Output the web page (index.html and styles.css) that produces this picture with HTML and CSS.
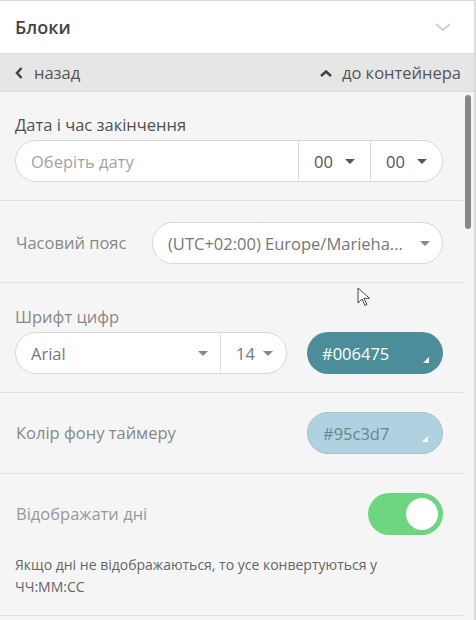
FILE: index.html
```html
<!DOCTYPE html>
<html>
<head>
  <title>Блоки</title>
  <link rel="stylesheet" href="styles.css">
</head>
<body>
  <div class="panel">
    <div class="panelHeader">
      <span class="panelTitle">Блоки</span>
      <svg class="collapseIcon" width="18" height="12" viewBox="0 0 18 12"><path d="M2 3l7 6 7-6" fill="none" stroke="#cfcfcf" stroke-width="2"/></svg>
    </div>
    <div class="navBar">
      <a class="navLink back">
        <svg width="10" height="14" viewBox="0 0 10 14"><path d="M7.5 2L3 7l4.5 5" fill="none" stroke="#444" stroke-width="2.6"/></svg>
        назад
      </a>
      <a class="navLink">
        <svg width="14" height="10" viewBox="0 0 14 10"><path d="M2 8l5-4.5 5 4.5" fill="none" stroke="#444" stroke-width="2.6"/></svg>
        до контейнера
      </a>
    </div>
    <div class="content">
      <div class="sections">
        <div class="section endDate">
          <div class="fieldLabel dark">Дата і час закінчення</div>
          <div class="pill">
            <div class="pillPart grow placeholder">Оберіть дату</div>
            <div class="pillPart small">00 <span class="caret"></span></div>
            <div class="pillPart small">00 <span class="caret"></span></div>
          </div>
        </div>

        <div class="section row timeZone">
          <div class="fieldLabel inline">Часовий пояс</div>
          <div class="pill zone">
            <div class="pillPart grow muted">(UTC+02:00) Europe/Marieha... <span class="caret light"></span></div>
          </div>
        </div>

        <div class="section digitFont">
          <div class="fieldLabel">Шрифт цифр</div>
          <div class="row">
            <div class="pill fontPick">
              <div class="pillPart grow muted">Arial <span class="caret light"></span></div>
              <div class="pillPart size muted">14 <span class="caret light"></span></div>
            </div>
            <div class="colorBox dark">#006475<span class="corner"></span></div>
          </div>
        </div>

        <div class="section row timerBg">
          <div class="fieldLabel inline">Колір фону таймеру</div>
          <div class="colorBox light">#95c3d7<span class="corner"></span></div>
        </div>

        <div class="section showDays">
          <div class="row">
            <div class="fieldLabel inline pale">Відображати дні</div>
            <div class="toggle on"><span class="knob"></span></div>
          </div>
          <p class="hint">Якщо дні не відображаються, то усе конвертуються у ЧЧ:ММ:СС</p>
        </div>
      </div>
      <div class="track"><div class="thumb"></div></div>
    </div>
    <svg class="pointer" width="14" height="20" viewBox="0 0 14 20"><path d="M1 1v15l4-4 3 6.5 2-1-3-6.2h5.5z" fill="#fff" stroke="#444" stroke-width="1"/></svg>
  </div>
</body>
</html>
```

FILE: styles.css
```css
body {
  margin: 0;
  background-color: #dcdcdc;
  font-family: "Open Sans", "Noto Sans", sans-serif;
}
.panel {
  position: relative;
  width: 474px;
  height: 619px;
  border-top: 1px solid #dcdcdc;
  background-color: #f5f5f5;
  overflow: hidden;
}
.panelHeader {
  display: flex;
  align-items: center;
  justify-content: space-between;
  height: 52px;
  padding: 0 22px 0 15px;
  background-color: #fff;
  border-bottom: 1px solid #dcdcdc;
}
.panelTitle {
  font-size: 18px;
  font-weight: 600;
  color: #444;
}
.navBar {
  display: flex;
  align-items: center;
  justify-content: space-between;
  height: 37px;
  padding: 0 13px 0 14px;
  background-color: #e6e6e6;
  border-bottom: 1px solid #dcdcdc;
  font-size: 16.5px;
  color: #555;
}
.navLink {
  display: flex;
  align-items: center;
  gap: 9px;
}
.navLink.back {
  gap: 10px;
}
.content {
  display: flex;
}
.sections {
  flex: 1;
}
.track {
  width: 11px;
  padding-top: 3px;
}
.thumb {
  width: 6px;
  height: 134px;
  margin-left: 2px;
  border-radius: 3px;
  background-color: #888;
}
.section {
  padding: 19px 20px 19px 15px;
  border-bottom: 1px solid #e0e0e0;
}
.section.endDate {
  padding-top: 23px;
  padding-bottom: 18px;
}
.section.timeZone {
  padding-top: 21px;
  padding-bottom: 18px;
}
.section.digitFont {
  padding-top: 24px;
  padding-bottom: 18px;
}
.section.showDays {
  padding-bottom: 17px;
}
.row {
  display: flex;
  align-items: center;
  gap: 20px;
}
.fieldLabel {
  font-size: 16.5px;
  line-height: 20px;
  color: #888;
  margin-bottom: 5px;
}
.fieldLabel.dark {
  color: #505050;
  margin-bottom: 5px;
}
.fieldLabel.inline {
  flex: 1;
  margin: 0 0 0 1px;
}
.fieldLabel.pale {
  color: #999;
}
.pill {
  display: flex;
  height: 40px;
  background-color: #fff;
  border: 1px solid #d8d8d8;
  border-radius: 21px;
  font-size: 16.5px;
  color: #555;
}
.pill.zone {
  width: 289px;
}
.pill.fontPick {
  width: 270px;
}
.pillPart {
  display: flex;
  align-items: center;
  justify-content: space-between;
  padding: 0 15px 0 15px;
  border-left: 1px solid #ddd;
}
.pillPart:first-child {
  border-left: none;
}
.pillPart.grow {
  flex: 1;
  padding-left: 15px;
  padding-right: 12px;
}
.pillPart.small {
  width: 72px;
  box-sizing: border-box;
}
.pillPart.size {
  width: 66px;
  box-sizing: border-box;
  padding-left: 15px;
  padding-right: 13px;
}
.placeholder {
  color: #a3a3a3;
}
.muted {
  color: #777;
}
.caret {
  width: 0;
  height: 0;
  border-left: 5px solid transparent;
  border-right: 5px solid transparent;
  border-top: 5px solid #555;
}
.caret.light {
  border-top-color: #888;
}
.colorBox {
  position: relative;
  width: 136px;
  height: 42px;
  box-sizing: border-box;
  padding-left: 15px;
  display: flex;
  align-items: center;
  border-radius: 21px;
  font-size: 16.5px;
}
.colorBox.dark {
  background-color: #4b8e9a;
  color: #fff;
}
.colorBox.light {
  background-color: #b0d1df;
  border: 1px solid #9fc2d1;
  color: #6a8591;
}
.corner {
  position: absolute;
  right: 14px;
  bottom: 11px;
  width: 0;
  height: 0;
  border-left: 6px solid transparent;
  border-bottom: 6px solid #fff;
}
.toggle {
  width: 75px;
  height: 42px;
  box-sizing: border-box;
  padding: 5px;
  display: flex;
  justify-content: flex-end;
  border-radius: 21px;
  background-color: #6ed680;
}
.knob {
  width: 32px;
  height: 32px;
  border-radius: 50%;
  background-color: #fff;
}
.hint {
  margin: 19px 0 0 0;
  font-size: 14px;
  line-height: 22px;
  color: #666;
}
.pointer {
  position: absolute;
  left: 357px;
  top: 286px;
}
```
